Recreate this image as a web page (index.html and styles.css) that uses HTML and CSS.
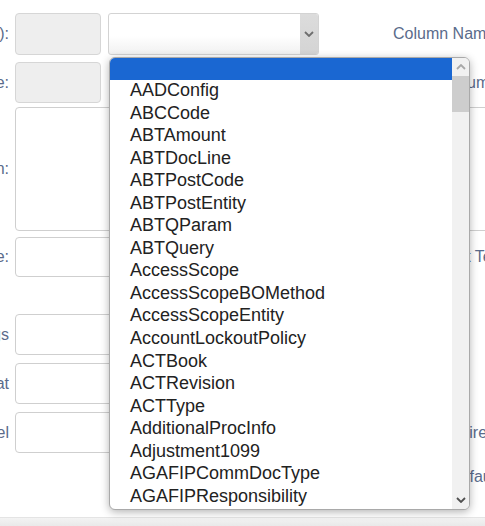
FILE: index.html
```html
<!DOCTYPE html>
<html>
<head>
<meta charset="utf-8">
<link rel="stylesheet" href="styles.css">
</head>
<body>
<div class="page">
  <div class="row r1">
    <label class="lbl">Table (ID):</label>
    <div class="inp ro short"></div>
    <div class="select">
      <span class="sel-arrow"><svg width="10" height="6" viewBox="0 0 10 6"><polyline points="1,1 5,5 9,1" fill="none" stroke="#6e6e6e" stroke-width="1.8"/></svg></span>
    </div>
    <span class="rlbl m1">Column Name:</span>
  </div>
  <div class="row r2">
    <label class="lbl">Table Name:</label>
    <div class="inp ro short"></div>
    <span class="rlbl m2">Column:</span>
  </div>
  <div class="row r3">
    <label class="lbl">Description:</label>
    <div class="inp wide"></div>
  </div>
  <div class="row r4">
    <label class="lbl">Table Type:</label>
    <div class="inp mid"></div>
    <span class="rlbl m4">Default Text</span>
  </div>
  <div class="row r5">
    <label class="lbl">Flags</label>
    <div class="inp mid"></div>
  </div>
  <div class="row r6">
    <label class="lbl">Format</label>
    <div class="inp mid"></div>
  </div>
  <div class="row r7">
    <label class="lbl">Label</label>
    <div class="inp mid"></div>
    <span class="rlbl m7">Required</span>
  </div>
  <div class="row r8">
    <span class="rlbl m8">Default</span>
  </div>
  <div class="footer"></div>

  <div class="popup">
    <div class="list">
      <div class="opt sel"></div>
      <div class="opt">AADConfig</div>
      <div class="opt">ABCCode</div>
      <div class="opt">ABTAmount</div>
      <div class="opt">ABTDocLine</div>
      <div class="opt">ABTPostCode</div>
      <div class="opt">ABTPostEntity</div>
      <div class="opt">ABTQParam</div>
      <div class="opt">ABTQuery</div>
      <div class="opt">AccessScope</div>
      <div class="opt">AccessScopeBOMethod</div>
      <div class="opt">AccessScopeEntity</div>
      <div class="opt">AccountLockoutPolicy</div>
      <div class="opt">ACTBook</div>
      <div class="opt">ACTRevision</div>
      <div class="opt">ACTType</div>
      <div class="opt">AdditionalProcInfo</div>
      <div class="opt">Adjustment1099</div>
      <div class="opt">AGAFIPCommDocType</div>
      <div class="opt">AGAFIPResponsibility</div>
      <div class="opt">AGAFIPTaxType</div>
    </div>
    <div class="sbar">
      <div class="sbtn"><svg width="10" height="6" viewBox="0 0 10 6"><polyline points="1,5 5,1 9,5" fill="none" stroke="#a8a8a8" stroke-width="1.8"/></svg></div>
      <div class="thumb"></div>
      <div class="track"></div>
      <div class="sbtn"><svg width="10" height="6" viewBox="0 0 10 6"><polyline points="1,1 5,5 9,1" fill="none" stroke="#505050" stroke-width="1.8"/></svg></div>
    </div>
  </div>
</div>
</body>
</html>
```
FILE: styles.css
```css
html, body {
  margin: 0;
  padding: 0;
  background: #fff;
  overflow: hidden;
}
body {
  font-family: "Liberation Sans", Arial, sans-serif;
  font-size: 16px;
  color: #333;
}
.page {
  position: relative;
  width: 485px;
  height: 526px;
  padding-top: 13px;
  box-sizing: border-box;
  display: flex;
  flex-direction: column;
}
.row {
  display: flex;
  align-items: center;
  flex-shrink: 0;
}
.lbl {
  width: 9px;
  margin-right: 6px;
  flex-shrink: 0;
  display: flex;
  justify-content: flex-end;
  white-space: nowrap;
  color: #5a6b8b;
}
.inp {
  box-sizing: border-box;
  border: 1px solid #cfcfcf;
  border-radius: 4px;
  background: #fff;
  flex-shrink: 0;
  height: 100%;
}
.inp.ro { background: #eeeeee; border-color: #d6d6d6; }
.short { width: 86px; }
.wide { width: 600px; }
.mid { width: 300px; }
.r1 { height: 42px; }
.r2 { height: 41px; margin-top: 7px; }
.r3 { height: 124px; margin-top: 4px; }
.r4 { height: 40px; margin-top: 6px; }
.r5 { height: 41px; margin-top: 37px; }
.r6 { height: 41px; margin-top: 8px; }
.r7 { height: 41px; margin-top: 8px; }
.r8 { height: 20px; margin-top: 14px; }
.select {
  box-sizing: border-box;
  margin-left: 7px;
  width: 211px;
  height: 100%;
  border: 1px solid #d3d3d3;
  border-radius: 3px;
  background: linear-gradient(#ffffff 55%, #f1f1f1);
  display: flex;
  justify-content: flex-end;
  flex-shrink: 0;
  overflow: hidden;
}
.sel-arrow {
  width: 18px;
  background: linear-gradient(#dcdcdc, #d4d4d4);
  display: flex;
  align-items: center;
  justify-content: center;
}
.rlbl {
  white-space: nowrap;
  color: #5a6b8b;
  flex-shrink: 0;
}
.m1 { margin-left: 74px; }
.m2 { margin-left: 342px; }
.m4 { margin-left: 105px; }
.m7 { margin-left: 116px; }
.m8 { margin-left: 449px; }
.footer {
  margin-top: auto;
  height: 8px;
  background: linear-gradient(#f3f3f3, #e9e9e9);
  border-top: 1px solid #e4e4e4;
  flex-shrink: 0;
}
.popup {
  position: absolute;
  left: 109px;
  top: 57px;
  width: 361px;
  height: 453px;
  box-sizing: border-box;
  border: 1px solid #a9a9a9;
  border-radius: 6px;
  background: #fff;
  box-shadow: 0 2px 8px rgba(0,0,0,0.3);
  display: flex;
  overflow: hidden;
  font-size: 18px;
}
.list {
  flex: 1;
  overflow: hidden;
}
.opt {
  box-sizing: border-box;
  height: 22.56px;
  line-height: 20.56px;
  padding-bottom: 2px;
  padding-left: 20px;
  color: #222;
  white-space: nowrap;
}
.opt.sel {
  height: 22px;
  background: #1a67d2;
}
.sbar {
  width: 17px;
  background: #f1f1f1;
  display: flex;
  flex-direction: column;
}
.sbtn {
  height: 18px;
  display: flex;
  align-items: center;
  justify-content: center;
  flex-shrink: 0;
}
.thumb {
  height: 36px;
  background: #cdcdcd;
  flex-shrink: 0;
}
.track { flex: 1; }
```
